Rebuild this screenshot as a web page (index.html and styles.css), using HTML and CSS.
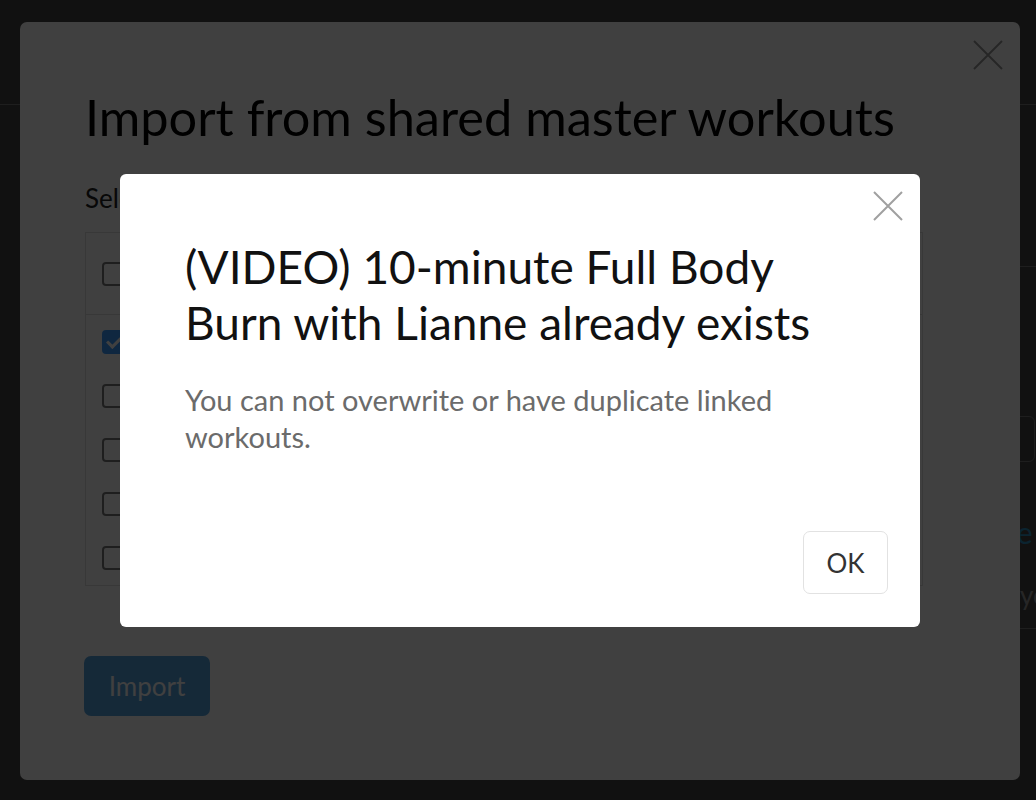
FILE: index.html
```html
<!DOCTYPE html>
<html>
<head>
	<meta charset="utf-8">
	<title>Import from shared master workouts</title>
	<link rel="stylesheet" href="styles.css">
</head>
<body>
	<div class="page">
		<header class="page__header"></header>
		<div class="page__body">
			<main class="page__main"></main>
			<aside class="page__side">
				<div class="page__field"></div>
				<div class="page__title">Live</div>
				<div class="page__note">you</div>
			</aside>
		</div>
	</div>

	<div class="modal">
		<button class="modal__close" type="button" aria-label="Close">
			<svg width="30" height="30" viewBox="0 0 30 30"><path d="M1 1L29 29M29 1L1 29" stroke="currentColor" stroke-width="2" fill="none"/></svg>
		</button>

		<h1 class="modal__title">Import from shared master workouts</h1>
		<p class="modal__lead">Select the workouts you want to import</p>

		<table class="list">
			<thead>
				<tr>
					<th class="list__check"><span class="check"></span></th>
					<th>Workout</th>
					<th>Created by</th>
				</tr>
			</thead>
			<tbody>
				<tr>
					<td class="list__check"><span class="check check_on"></span></td>
					<td>(VIDEO) 10-minute Full Body Burn with Lianne</td>
					<td>Lianne</td>
				</tr>
				<tr>
					<td class="list__check"><span class="check"></span></td>
					<td>Core Strength Circuit</td>
					<td>Marcus</td>
				</tr>
				<tr>
					<td class="list__check"><span class="check"></span></td>
					<td>Lower Body Power</td>
					<td>Marcus</td>
				</tr>
				<tr>
					<td class="list__check"><span class="check"></span></td>
					<td>Mobility Flow</td>
					<td>Lianne</td>
				</tr>
				<tr>
					<td class="list__check"><span class="check"></span></td>
					<td>Upper Body Push</td>
					<td>Dana</td>
				</tr>
			</tbody>
		</table>

		<button class="btn btn_primary" type="button">Import</button>
	</div>

	<div class="backdrop"></div>

	<div class="dialog">
		<button class="dialog__close" type="button" aria-label="Close">
			<svg width="30" height="30" viewBox="0 0 30 30"><path d="M1 1L29 29M29 1L1 29" stroke="currentColor" stroke-width="2" fill="none"/></svg>
		</button>
		<div class="dialog__body">
			<h2 class="dialog__title">(VIDEO) 10-minute Full Body Burn with Lianne already exists</h2>
			<p class="dialog__text">You can not overwrite or have duplicate linked workouts.</p>
		</div>
		<div class="dialog__footer">
			<button class="btn btn_default" type="button">OK</button>
		</div>
	</div>
</body>
</html>
```

FILE: styles.css
```css
body {
	margin: 0;
	background-color: #444;
	font-family: "Lato", "Open Sans", sans-serif;
	color: #222;
}

/* page behind the modals */
.page__header {
	height: 104px;
	border-bottom: 1px solid #777;
}
	.page__body {
		display: flex;
	}
	.page__main {
		flex: 0 0 1000px;
	}
	.page__side {
		flex: 1;
		padding-top: 161px;
		border-top: 1px solid #777;
		margin-top: 161px;
	}
		.page__field {
			width: 33px;
			height: 44px;
			border: 1px solid #777;
			border-radius: 6px;
			margin-top: -12px;
		}
		.page__title {
			margin: 52px 0 0 -21px;
			font-size: 30px;
			color: #2e8fc0;
		}
		.page__note {
			margin: 30px 0 0 20px;
			font-size: 26px;
			line-height: 30px;
			color: #999;
			padding-bottom: 18px;
			border-bottom: 1px solid #777;
		}

/* first modal */
.modal {
	position: fixed;
	top: 22px;
	left: 20px;
	width: 1000px;
	height: 758px;
	box-sizing: border-box;
	padding: 63px 64px 0 64px;
	background-color: #fff;
	border-radius: 7px;
}
	.modal__close {
		position: absolute;
		top: 18px;
		right: 17px;
		padding: 0;
		border: 0;
		background: none;
		color: #999;
	}
	.modal__title {
		margin: 0 0 0 1px;
		font-size: 50.5px;
		line-height: 64px;
		font-weight: 400;
		color: #000;
	}
	.modal__lead {
		margin: 33px 0 0 1px;
		font-size: 26px;
		line-height: 32px;
		color: #222;
	}

	.list {
		width: 838px;
		margin: 18px 0 0 1px;
		border-collapse: collapse;
		border: 1px solid #ddd;
		font-size: 24px;
	}
		.list th,
		.list td {
			height: 54px;
			padding: 0 16px;
			text-align: left;
			font-weight: 400;
		}
		.list th {
			height: 81px;
			border-bottom: 1px solid #ddd;
		}
		.list__check {
			width: 24px;
		}

	.check {
		display: block;
		width: 20px;
		height: 20px;
		border: 2px solid #7a7a7a;
		border-radius: 4px;
	}
	.check_on {
		border-color: #3f9dff;
		background-color: #3f9dff;
		position: relative;
	}
		.check_on:after {
			content: "";
			position: absolute;
			left: 6px;
			top: 1px;
			width: 6px;
			height: 12px;
			border: solid #fff;
			border-width: 0 3px 3px 0;
			transform: rotate(45deg);
		}

.btn {
	font-family: inherit;
	font-size: 26px;
	border-radius: 7px;
	cursor: pointer;
}
	.btn_primary {
		margin-top: 70px;
		width: 126px;
		height: 60px;
		border: 0;
		background-color: #56a2e0;
		color: #fff;
	}
	.btn_default {
		width: 85px;
		height: 63px;
		border: 1px solid #e2e2e2;
		background-color: #fff;
		color: #333;
	}

.backdrop {
	position: fixed;
	top: 0;
	right: 0;
	bottom: 0;
	left: 0;
	background-color: rgba(0,0,0,.75);
}

/* second dialog */
.dialog {
	position: fixed;
	top: 174px;
	left: 120px;
	width: 800px;
	height: 453px;
	background-color: #fff;
	border-radius: 6px;
}
	.dialog__close {
		position: absolute;
		top: 17px;
		right: 17px;
		padding: 0;
		border: 0;
		background: none;
		color: #a0a0a0;
	}
	.dialog__body {
		padding: 65px 65px 0;
	}
	.dialog__title {
		width: 650px;
		margin: 0;
		font-size: 46px;
		line-height: 56px;
		font-weight: 400;
		color: #111;
	}
	.dialog__text {
		margin: 30px 0 0;
		font-size: 29px;
		line-height: 37px;
		color: #6b6b6b;
	}
	.dialog__footer {
		display: flex;
		justify-content: flex-end;
		padding: 76px 32px 0;
	}
```
